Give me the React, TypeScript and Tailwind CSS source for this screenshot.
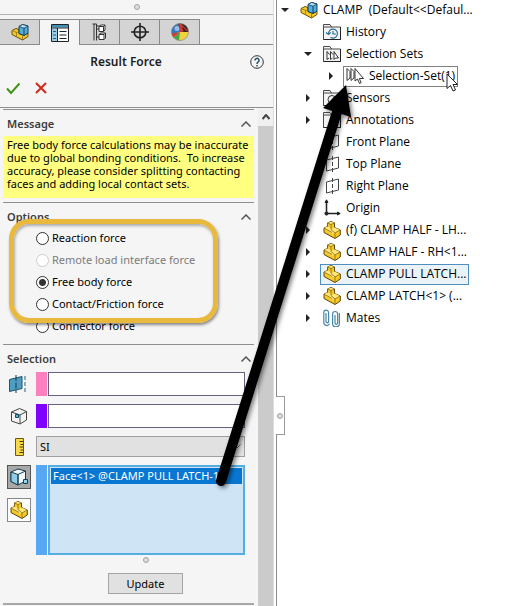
import React, { useState } from 'react';
import { clsx } from 'clsx';

function PartIcon({ className = 'w-[18px] h-[18px]' }: { className?: string }) {
  return (
    <svg viewBox="0 0 18 18" className={className} strokeLinejoin="round">
      <path d="M1 7 4.500 5.500V2L8 .500 11.500 2v4.500L17.300 9v5L12 17.500 1 11.500Z" fill="#f5c928" stroke="#5d4506" />
      <path d="M4.500 2 8 3.500 11.500 2 8 .700ZM8 8.500l3.500-2L17 9l-5 3ZM1 7l3.500-1.500L8 7v1.500l4 3.500-3 .500Z" fill="#ffe77a" />
      <path d="M4.500 2 8 3.500 11.500 2M8 3.500v5l4 3.500 5-3M12 12v5M1 7l8 4.500M4.500 5.500V2" fill="none" stroke="#8a6a10" strokeWidth=".8" />
    </svg>
  );
}

function AssemblyIcon({ className = 'w-[18px] h-[18px]' }: { className?: string }) {
  return (
    <svg viewBox="0 0 18 18" className={className} strokeLinejoin="round">
      <path d="M1 7.500 5 5.500l3 1v4l5 2 4-2.500v3.500l-5.500 3.500L1 11.500Z" fill="#f5c928" stroke="#6b500a" />
      <path d="m1 7.500 4.500 2 2.500-1M5.500 9.500v3.500M11.500 13v4" fill="none" stroke="#94700f" strokeWidth=".8" />
      <path d="M8 3.500 11.500 1.500 17 3v7l-4 2.500-5-2Z" fill="#54aedb" stroke="#123e5c" />
      <path d="m8 3.500 5 1.700L17 3l-5.500-1.500Z" fill="#b9e2f5" stroke="#123e5c" strokeWidth=".8" />
      <path d="M13 5.200v7" stroke="#123e5c" />
    </svg>
  );
}

function FolderIcon({ children }: { children?: React.ReactNode }) {
  return (
    <svg viewBox="0 0 18 18" className="w-[18px] h-[18px]" fill="none">
      <path d="M.500 16.500V1.500h6.500l1.500 2.500h9v12.500Z" fill="#f3f3f3" stroke="#4a4a4a" />
      <path d="M1 4h8" stroke="#4a4a4a" />
      <path d="M.500 16.500h17V4" stroke="#222" />
      {children}
    </svg>
  );
}

function HistoryIcon() {
  return (
    <FolderIcon>
      <path d="M5.500 11a4.500 4.500 0 1 1 2 3.300M3 9.500l2.500 2 2.200-2.200M10 8v3h3" stroke="#2a6f96" strokeWidth="1.200" />
    </FolderIcon>
  );
}

function SelectionSetsIcon() {
  return (
    <FolderIcon>
      <path d="M4 6.500v8l2-1.500M7.500 6.500v8l2-1.500M11 6.500v8l1.500-1.500h3ZM4 6.500l2.500 3M7.500 6.500l2.500 3" fill="#fff" stroke="#333" />
    </FolderIcon>
  );
}

function SensorsIcon() {
  return (
    <FolderIcon>
      <circle cx="9" cy="10.500" r="4" stroke="#333" />
      <path d="M9 10.500 11.500 8" stroke="#333" />
    </FolderIcon>
  );
}

function CursorSetIcon() {
  return (
    <svg viewBox="0 0 18 18" className="w-[18px] h-[18px]" fill="#fff" stroke="#333" strokeLinejoin="round">
      <path d="M1 1.500v12l3-2.500V4.500ZM5 1.500v12l3-2.500V4.500Z" />
      <path d="M9 1.500v12.500l2.500-2 2 4.500 1.700-.8-1.900-4.200H17.500Z" />
    </svg>
  );
}

function PlaneIcon() {
  return (
    <svg viewBox="0 0 18 18" className="w-[18px] h-[18px]" fill="none" stroke="#444">
      <path d="m3.500 5 12-3v11l-12 3Z" />
      <path d="M9.500 1v16" strokeDasharray="4 2" />
    </svg>
  );
}

function OriginIcon() {
  return (
    <svg viewBox="0 0 18 18" className="w-[18px] h-[18px]" fill="#222" stroke="#222">
      <path d="M3.500 3v11.500H15" fill="none" strokeWidth="1.500" />
      <path d="m3.500.8 1.500 2.700H2ZM17.200 14.500l-2.700 1.500v-3Z" />
      <circle cx="3.500" cy="14.500" r="1.600" />
    </svg>
  );
}

function MatesIcon() {
  return (
    <svg viewBox="0 0 18 18" className="w-[18px] h-[18px]" fill="none" stroke="#4b87a8" strokeWidth="1.200">
      <path d="M3 4v8.500a1.300 1.300 0 0 0 2.600 0V3.500a2.400 2.400 0 0 0-4.800 0v10a3 3 0 0 0 5.700 1.300" />
      <path d="M12 6v8a1.300 1.300 0 0 0 2.600 0V5a2.500 2.500 0 0 0-5 0v9.500a3.200 3.200 0 0 0 6.800 0V4" />
    </svg>
  );
}

function PropertyIcon() {
  return (
    <svg viewBox="0 0 18 18" className="w-[18px] h-[18px]" fill="none" stroke="#222">
      <path d="M.500.500h17v17H.500Z" fill="#fff" />
      <path d="M1 1h16v2.500H1Z" fill="#3d92bd" stroke="none" />
      <path d="M1 4.500h5.500v12.500H1Z" fill="#9ccbe3" stroke="none" />
      <path d="M.500 4h17M6.500 4v13.500" />
      <path d="M8.500 7.500h7M8.500 11h7M8.500 14.500h7" />
      <path d="M2 7.500h3M2 11h3M2 14.500h3" stroke="#17658f" />
    </svg>
  );
}

function ConfigIcon() {
  return (
    <svg viewBox="0 0 18 18" className="w-[18px] h-[18px]" fill="none" stroke="#333">
      <path d="M3 1v16.500M5.500 3v14.500M1.500 1h4v2h3" />
      <path d="M5.500 6h2.500M5.500 14h2.500" />
      <path d="M8 3.500 10 2h4v5l-1.500 1.500H8ZM8 11.500l2-1.500h4.500v5L13 16.500H8Z" fill="#fff" />
      <path d="M8 3.500h4.500v5M12.500 3.500 14 2M8 11.500h5v5M13 11.500l1.500-1.500" />
    </svg>
  );
}

function TargetIcon() {
  return (
    <svg viewBox="0 0 18 18" className="w-[18px] h-[18px]" fill="none" stroke="#222" strokeWidth="1.600">
      <circle cx="9" cy="9" r="5.800" />
      <path d="M9 0v18M0 9h18" />
    </svg>
  );
}

function AppearanceIcon() {
  return (
    <svg viewBox="0 0 18 18" className="w-[18px] h-[18px]">
      <path d="M9 9 .600 11A8.500 8.500 0 0 1 7 .800Z" fill="#3079cb" />
      <path d="M9 9 7 .700A8.500 8.500 0 0 1 17.500 9Z" fill="#2a2320" />
      <path d="m9 9-1-8.300h2L17.300 8Z" fill="#cc3b33" />
      <path d="M11 3.500 16.500 9l-4-.500Z" fill="#2a2320" />
      <path d="M9 9h8.500a8.500 8.500 0 0 1-9.500 8.400Z" fill="#f2d23c" />
      <path d="m9 9-1 8.400A8.500 8.500 0 0 1 2.500 14.500Z" fill="#45a545" />
      <path d="m9 9-6.500 5.500A8.500 8.500 0 0 1 .600 10.500Z" fill="#d23a2c" />
      <circle cx="6" cy="5.500" r="2.500" fill="#fff" opacity=".5" />
      <circle cx="9" cy="9" r="8.500" fill="none" stroke="#8a7c70" strokeWidth=".6" />
    </svg>
  );
}

function MirrorPlaneIcon() {
  return (
    <svg viewBox="0 0 18 18" className="w-[18px] h-[18px]" fill="none">
      <path d="M.500 4.500 13 1.500v12L.500 16.500Z" fill="#4f9dc0" stroke="#1d566f" />
      <path d="M7 0v18" stroke="#143c4f" strokeDasharray="6 1.500" />
      <path d="M16 1v16" stroke="#25647f" strokeDasharray="4 2" />
    </svg>
  );
}

function VertexCubeIcon() {
  return (
    <svg viewBox="0 0 18 18" className="w-[18px] h-[18px]" fill="#f4f4f4" stroke="#444" strokeLinejoin="round">
      <path d="m1.500 5 8-3.500 7 3V13L10 17l-8.500-3Z" />
      <path d="m1.500 5 8.500 3 6.500-3.500M10 8v9" fill="none" />
      <path d="M5.500 7.500h3v3h-3Z" fill="#55b6df" stroke="#17485f" />
    </svg>
  );
}

function RulerIcon() {
  return (
    <svg viewBox="0 0 18 18" className="w-[18px] h-[18px]">
      <path d="M5.500.500h8v17h-8Z" fill="#f7d94a" stroke="#6b5717" />
      <path d="M13 3.500H9.500M13 6.500h-2.500M13 9H9.500M13 12h-2.500M13 14.500H9.500" stroke="#4d3d0d" />
    </svg>
  );
}

function FaceCubeIcon() {
  return (
    <svg viewBox="0 0 18 18" className="w-[18px] h-[18px]" strokeLinejoin="round">
      <path d="M1 4 8 1l7.500 2v10L8 17l-7-3.500Z" fill="#f0f8fb" stroke="#1b3c4c" />
      <path d="m1 4 7 2.500V17l-7-3.500Z" fill="#8fcde6" stroke="#1b3c4c" />
      <path d="m8 6.500 7.500-3.500M8 6.500V17" fill="none" stroke="#1b3c4c" />
      <path d="M13.500 11.500h4v4h-4Z" fill="#8ed4ef" stroke="#173f53" />
    </svg>
  );
}

const tabs = [
  { label: 'Feature tree', icon: <AssemblyIcon /> },
  { label: 'Property manager', icon: <PropertyIcon /> },
  { label: 'Configurations', icon: <ConfigIcon /> },
  { label: 'Dimensions', icon: <TargetIcon /> },
  { label: 'Appearances', icon: <AppearanceIcon /> },
];

const forces = [
  { label: 'Reaction force' },
  { label: 'Remote load interface force', disabled: true },
  { label: 'Free body force' },
  { label: 'Contact/Friction force' },
  { label: 'Connector force' },
];

type TreeNode = {
  label: string;
  icon: React.ReactNode;
  level: 0 | 1 | 2;
  arrow?: 'open' | 'closed';
  outline?: 'gray' | 'blue';
};

const tree: TreeNode[] = [
  { label: 'CLAMP  (Default<<Defaul...', icon: <AssemblyIcon />, level: 0, arrow: 'open' },
  { label: 'History', icon: <HistoryIcon />, level: 1 },
  { label: 'Selection Sets', icon: <SelectionSetsIcon />, level: 1, arrow: 'open' },
  { label: 'Selection-Set(1)', icon: <CursorSetIcon />, level: 2, arrow: 'closed', outline: 'gray' },
  { label: 'Sensors', icon: <SensorsIcon />, level: 1, arrow: 'closed' },
  { label: 'Annotations', icon: <FolderIcon />, level: 1, arrow: 'closed' },
  { label: 'Front Plane', icon: <PlaneIcon />, level: 1 },
  { label: 'Top Plane', icon: <PlaneIcon />, level: 1 },
  { label: 'Right Plane', icon: <PlaneIcon />, level: 1 },
  { label: 'Origin', icon: <OriginIcon />, level: 1 },
  { label: '(f) CLAMP HALF - LH...', icon: <PartIcon />, level: 1, arrow: 'closed' },
  { label: 'CLAMP HALF - RH<1...', icon: <PartIcon />, level: 1, arrow: 'closed' },
  { label: 'CLAMP PULL LATCH...', icon: <PartIcon />, level: 1, arrow: 'closed', outline: 'blue' },
  { label: 'CLAMP LATCH<1> (...', icon: <PartIcon />, level: 1, arrow: 'closed' },
  { label: 'Mates', icon: <MatesIcon />, level: 1, arrow: 'closed' },
];

const indent = { 0: 'pl-0', 1: 'pl-[23px]', 2: 'pl-[46px]' };

function TreeRow({ node }: { node: TreeNode }) {
  return (
    <li className={clsx('flex h-[22px] items-center', indent[node.level])}>
      <span className="w-5 shrink-0">
        {node.arrow && (
          <svg viewBox="0 0 8 8" className="ml-1 w-2 h-2" fill="#222">
            {node.arrow === 'open' ? <path d="M0 2h8L4 6Z" /> : <path d="M2 0v8l4-4Z" />}
          </svg>
        )}
      </span>
      <span
        className={clsx(
          'flex h-[21px] items-center gap-[5px] whitespace-pre border pl-[2px] pr-[2px]',
          !node.outline && 'border-transparent',
          node.outline === 'gray' && 'border-[#808080]',
          node.outline === 'blue' && 'border-[#4f8fc0] bg-[#eaf3f8]',
        )}
      >
        {node.icon}
        {node.label}
      </span>
    </li>
  );
}

function Section({ title, children }: { title: string; children: React.ReactNode }) {
  return (
    <section className="border-t border-[#8f8f8f]">
      <h2>
        <button type="button" className="flex h-[26px] w-full items-center justify-between pl-1 pr-[3px] pt-[2px] text-[11px] font-semibold text-[#3c3c3c]">
          {title}
          <svg viewBox="0 0 10 6" className="h-[6px] w-[10px]" fill="none" stroke="#555" strokeWidth="1.500">
            <path d="m.500 5.500 4.500-4.500 4.500 4.500" />
          </svg>
        </button>
      </h2>
      {children}
    </section>
  );
}

function Dot() {
  return <span className="block size-[6px] rounded-full border-[1.5px] border-[#a2a2a2] bg-[#ddd]" />;
}

export default function App() {
  const [force, setForce] = useState('Free body force');

  return (
    <div className="relative flex min-h-screen overflow-hidden bg-white font-['Noto_Sans','Open_Sans',sans-serif] text-[12px] leading-4 text-black">
      <aside className="flex w-[277px] shrink-0 flex-col border-r border-[#8c8c8c] bg-white pr-[2px]">
        <div className="flex grow flex-col border-r border-[#dcdcdc] bg-[#f5f5f5]">
          <div className="flex h-[15px] items-center justify-center border-b border-[#b4b4b4]">
            <Dot />
          </div>
          <div role="tablist" className="flex h-[30px] pt-1">
            {tabs.map((tab, i) => (
              <button
                key={tab.label}
                type="button"
                role="tab"
                aria-label={tab.label}
                aria-selected={i === 1}
                className={clsx(
                  'flex w-10 items-center justify-center border-r border-t border-[#8a8a8a]',
                  i !== 1 && 'border-b bg-[#d4d4d4]',
                )}
              >
                {tab.icon}
              </button>
            ))}
            <span className="grow border-b border-[#8a8a8a]" />
          </div>
          <header className="flex h-[34px] items-center pr-[9px]">
            <h1 className="grow pl-[2px] text-center font-semibold text-[#1e1e1e]">Result Force</h1>
            <button type="button" aria-label="Help">
              <svg viewBox="0 0 14 14" className="size-[14px]" fill="none" stroke="#24516d">
                <circle cx="7" cy="7" r="6.300" stroke="#333" />
                <path d="M5 5.500a2 2 0 1 1 3 1.600C7.300 7.600 7 8 7 9M7 10v1.500" strokeWidth="1.500" />
              </svg>
            </button>
          </header>
          <div className="flex h-[29px] items-start gap-[14px] border-b border-[#8f8f8f] pl-[6px] pt-[2px]">
            <button type="button" aria-label="OK">
              <svg viewBox="0 0 14 14" className="size-[14px]" fill="none" stroke="#3f9417" strokeWidth="2">
                <path d="m1 7.500 4 4.500 8.500-9.500" />
              </svg>
            </button>
            <button type="button" aria-label="Cancel">
              <svg viewBox="0 0 14 14" className="size-[14px]" fill="none" stroke="#d4291b" strokeWidth="2">
                <path d="m2 2 10 10M12 2 2 12" />
              </svg>
            </button>
          </div>

          <div className="flex grow">
            <div className="min-w-0 grow pl-[3px] pr-1 pt-[1px]">
              <Section title="Message">
                <p className="mb-1 h-[62px] bg-[#ffff80] pl-1 pt-[2px] text-[11px] leading-[13px] whitespace-pre">
                  {`Free body force calculations may be inaccurate
due to global bonding conditions.  To increase
accuracy, please consider splitting contacting
faces and adding local contact sets.`}
                </p>
              </Section>

              <Section title="Options">
                <fieldset className="-mt-[2px] mb-[7px]">
                  {forces.map(({ label, disabled }) => (
                    <label
                      key={label}
                      className={clsx('flex h-[22px] items-center gap-[3px] pl-[33px] text-[11px]', disabled && 'text-[#7b7b7b]')}
                    >
                      <input
                        type="radio"
                        name="force"
                        disabled={disabled}
                        checked={force === label}
                        onChange={() => setForce(label)}
                        className="size-[13px] appearance-none rounded-full border border-[#333] bg-white checked:bg-[radial-gradient(circle,#333_3px,#fff_4px)] disabled:border-[#ccc]"
                      />
                      {label}
                    </label>
                  ))}
                </fieldset>
              </Section>

              <Section title="Selection">
                <div className="flex flex-col gap-2 pr-[9px] pt-[1px]">
                  <label className="flex h-6 items-center">
                    <span className="w-[33px] pl-[6px]"><MirrorPlaneIcon /></span>
                    <span className="mr-[1px] h-full w-[11px] bg-[#fb80bd]" />
                    <input aria-label="Plane" className="h-full min-w-0 grow border border-[#646482] bg-white px-1" />
                  </label>
                  <label className="flex h-6 items-center">
                    <span className="w-[33px] pl-[7px]"><VertexCubeIcon /></span>
                    <span className="mr-[1px] h-full w-[11px] bg-[#7f00ff]" />
                    <input aria-label="Vertex" className="h-full min-w-0 grow border border-[#646482] bg-white px-1" />
                  </label>
                  <label className="flex h-[21px] items-center">
                    <span className="w-[33px] pl-[7px]"><RulerIcon /></span>
                    <select aria-label="Units" className="h-full min-w-0 grow appearance-none border border-[#a0a0a0] bg-[#e1e1e1] px-[3px] text-[11px]">
                      <option>SI</option>
                    </select>
                    <svg viewBox="0 0 8 5" className="-ml-3 mr-1 h-[5px] w-2" fill="none" stroke="#666">
                      <path d="m.500.500 3.500 3.500L7.500.500" />
                    </svg>
                  </label>
                  <div className="flex h-[90px]">
                    <div className="flex w-[33px] flex-col gap-[9px] pl-1">
                      <button type="button" aria-label="Faces" className="flex size-6 items-center justify-center border border-[#555] bg-[#a8a8a8]">
                        <FaceCubeIcon />
                      </button>
                      <button type="button" aria-label="Components" className="flex size-6 items-center justify-center border border-[#888] bg-white">
                        <PartIcon />
                      </button>
                    </div>
                    <span className="mr-[1px] w-[11px] bg-[#58a7f2]" />
                    <ul role="listbox" aria-label="Selected faces" className="min-w-0 grow border-2 border-[#56aee0] bg-[#cfe4f5] p-[1px]">
                      <li role="option" aria-selected className="h-4 bg-[#0877d2] pl-[2px] text-[11px] whitespace-nowrap text-white">
                        {'Face<1> @CLAMP PULL LATCH-1'}
                      </li>
                    </ul>
                  </div>
                </div>
                <div className="flex flex-col items-center gap-[10px] pb-[10px] pl-[34px] pt-[2px]">
                  <Dot />
                </div>
                <div className="flex justify-center border-b-2 border-[#a8a8a8] pb-[9px] pr-1 pl-[38px]">
                  <button type="button" className="h-[21px] w-[75px] border border-[#a5a5a5] bg-[#e1e1e1] text-[11px]">
                    Update
                  </button>
                </div>
              </Section>
            </div>
            <div className="w-[15px] shrink-0 bg-[#cbcbcb]">
              <div className="flex h-[18px] items-center justify-center bg-[#f0f0f0]">
                <svg viewBox="0 0 8 6" className="h-[6px] w-2" fill="none" stroke="#444" strokeWidth="2">
                  <path d="m.500 5 3.500-4 3.500 4" />
                </svg>
              </div>
            </div>
          </div>
        </div>
      </aside>

      <nav aria-label="Feature tree" className="min-w-0 grow font-['Open_Sans','Noto_Sans',sans-serif]">
        <ul className="-mt-px">
          {tree.map((node) => (
            <TreeRow key={node.label} node={node} />
          ))}
        </ul>
      </nav>

      {/* splitter handle */}
      <div className="absolute left-[276px] top-[396px] flex h-[39px] w-[9px] items-center justify-center border border-l-0 border-[#999] bg-white">
        <Dot />
      </div>

      {/* callouts */}
      <div className="pointer-events-none absolute left-[9px] top-[219px] h-[104px] w-[209px] rounded-[20px] border-[5px] border-[#e8b93c] shadow-[1px_2px_3px_rgba(0,0,0,0.45),inset_1px_2px_3px_rgba(0,0,0,0.3)]" />
      <svg viewBox="0 0 514 606" className="pointer-events-none absolute left-0 top-0 h-[606px] w-[514px] drop-shadow-[2px_2px_2px_rgba(0,0,0,0.5)]">
        <path d="M221 481 337 112" stroke="#000" strokeWidth="10" strokeLinecap="round" />
        <path d="m346 85 5 32-28-9Z" />
      </svg>
      <svg viewBox="0 0 12 19" className="pointer-events-none absolute left-[446px] top-[73px] h-[19px] w-3" fill="#fff" stroke="#222">
        <path d="M1 1v14.500l3.500-3 2.500 5.500 2.500-1-2.500-5.500h4.500Z" />
      </svg>
    </div>
  );
}
